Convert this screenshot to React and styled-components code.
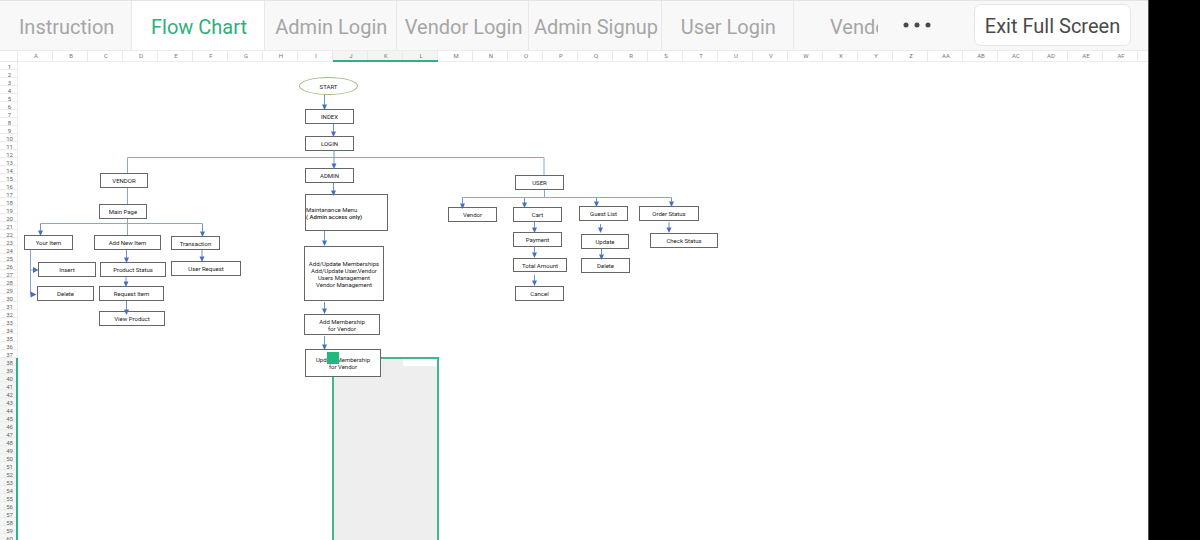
import React from 'react';
import styled, { createGlobalStyle } from 'styled-components';

const GlobalStyle = createGlobalStyle`
  * { box-sizing: border-box; }
  body {
    margin: 0;
    background: #fff;
    font-family: Roboto, "Liberation Sans", sans-serif;
  }
`;

const Shell = styled.div`
  display: flex;
  height: 100vh;
  overflow: hidden;
`;

const Main = styled.main`
  flex: 1;
  min-width: 0;
  display: flex;
  flex-direction: column;
`;

const Gutter = styled.aside`
  flex: 0 0 52px;
  background: #000;
  border-left: 1px solid #555;
`;

const TopBar = styled.header`
  display: flex;
  flex: 0 0 50px;
  background: #f8f8f8;
  border-top: 1px solid #e4e4e4;
`;

const TabStrip = styled.nav`
  flex: 1;
  min-width: 0;
  display: grid;
  grid-template-columns: repeat(6, minmax(0, 1fr)) 84px;
  overflow: hidden;
`;

const Tab = styled.button`
  border: 0;
  border-right: ${(p) => (p.$cut ? 0 : '1px solid #e8e8e8')};
  padding: ${(p) => (p.$cut ? '2px 0 0 36px' : '2px 0 0 2px')};
  background: ${(p) => (p.$active ? '#fff' : 'transparent')};
  color: ${(p) => (p.$active ? '#2bb07c' : '#a6a6a6')};
  font: 400 20px/24px Roboto, "Liberation Sans", sans-serif;
  text-align: ${(p) => (p.$cut ? 'left' : 'center')};
  white-space: nowrap;
  overflow: hidden;
`;

const Actions = styled.div`
  flex: 0 0 270px;
  display: flex;
  align-items: center;
  justify-content: space-between;
  padding: 0 17px 2px 18px;
`;

const MoreButton = styled.button`
  display: flex;
  align-items: center;
  justify-content: center;
  width: 42px;
  height: 40px;
  padding: 0;
  border: 0;
  background: transparent;
`;

const ExitButton = styled.button`
  width: 157px;
  height: 42px;
  padding: 2px 0 0;
  border: 1px solid #e6e6e6;
  border-radius: 7px;
  background: #fff;
  color: #4a4a4a;
  font: 400 20px/24px Roboto, "Liberation Sans", sans-serif;
  white-space: nowrap;
`;

const ColumnHeads = styled.div`
  display: flex;
  flex: 0 0 12px;
  overflow: hidden;
`;

const Corner = styled.div`
  flex: 0 0 18px;
  border: solid #e9e9e9;
  border-width: 1px 1px 1px 0;
`;

const ColumnHead = styled.div`
  flex: 0 0 35px;
  border-top: 1px solid #ececec;
  border-bottom: ${(p) => (p.$selected ? '2px solid #2fb281' : '1px solid #ececec')};
  box-shadow: inset -1px 0 #e9e9e9;
  padding-left: 1px;
  background: ${(p) => (p.$selected ? '#f2f5f4' : '#fff')};
  color: #777;
  font-size: 6px;
  line-height: 10px;
  text-align: center;
`;

const HeadFill = styled.div`
  flex: 1;
  border: solid #ececec;
  border-width: 1px 0;
`;

const SheetBody = styled.div`
  flex: 1;
  min-height: 0;
  display: flex;
  overflow: hidden;
`;

const RowHeads = styled.div`
  flex: 0 0 18px;
`;

const RowHead = styled.div`
  height: 8px;
  border-right: ${(p) => (p.$selected ? '2px solid #2fb281' : '1px solid #ececec')};
  box-shadow: inset 0 -1px #ececec;
  padding-left: ${(p) => (p.$selected ? '3px' : '2px')};
  background: ${(p) => (p.$selected ? '#f4f6f5' : '#fff')};
  color: #666;
  font-size: 6px;
  line-height: 9px;
  text-align: center;
`;

const Canvas = styled.section`
  position: relative;
  flex: 1;
  min-width: 0;
  overflow: hidden;
`;

const Wires = styled.svg`
  position: absolute;
  inset: 0;
  width: 100%;
  height: 100%;
`;

const Node = styled.div`
  position: absolute;
  left: ${(p) => p.$x}px;
  top: ${(p) => p.$y}px;
  width: ${(p) => p.$w}px;
  height: ${(p) => p.$h}px;
  display: flex;
  align-items: center;
  justify-content: ${(p) => (p.$left ? 'flex-start' : 'center')};
  border: 1px solid ${(p) => (p.$oval ? '#9dbb80' : '#666')};
  border-radius: ${(p) => (p.$oval ? '50%' : 0)};
  background: #fff;
  color: #222;
  font-size: 6px;
  line-height: 7px;
  text-align: ${(p) => (p.$left ? 'left' : 'center')};
  white-space: pre;
`;

const Strong = styled.span`
  font-weight: 500;
`;

const Selection = styled.div`
  position: absolute;
  left: 314px;
  top: 295px;
  bottom: -10px;
  width: 107px;
  border: 2px solid #3fb88b;
  background: #eee;
`;

const ActiveCell = styled.div`
  margin-left: auto;
  width: 34px;
  height: 7px;
  background: #fff;
`;

const Handle = styled.div`
  position: absolute;
  left: 309px;
  top: 290px;
  width: 12px;
  height: 12px;
  background: #22b97f;
`;

const TABS = [
  'Instruction', 'Flow Chart', 'Admin Login', 'Vendor Login',
  'Admin Signup', 'User Login', 'Vendor',
];

const COLUMNS = Array.from({ length: 32 }, (_, i) =>
  i < 26 ? String.fromCharCode(65 + i) : 'A' + String.fromCharCode(39 + i)
);
const SELECTED_COLUMNS = ['J', 'K', 'L'];
const ROWS = Array.from({ length: 60 }, (_, i) => i + 1);
const FIRST_SELECTED_ROW = 38;

// x, y, width, height, label
const NODES = [
  [287, 47, 49, 15, 'INDEX'],
  [287, 74, 49, 15, 'LOGIN'],
  [287, 106, 49, 15, 'ADMIN'],
  [286, 184, 80, 55, 'Add/Update Memberships\nAdd/Update User,Vendor\nUsers Management\nVendor Management'],
  [286, 252, 76, 21, 'Add Membership\nfor Vendor'],
  [287, 287, 76, 28, 'Update Membership\nfor Vendor'],
  [82, 111, 48, 15, 'VENDOR'],
  [81, 142, 48, 15, 'Main Page'],
  [6, 173, 49, 15, 'Your Item'],
  [76, 173, 67, 15, 'Add New Item'],
  [153, 174, 49, 14, 'Transaction'],
  [20, 200, 58, 15, 'Insert'],
  [19, 224, 57, 15, 'Delete'],
  [82, 200, 66, 15, 'Product Status'],
  [81, 224, 65, 15, 'Request Item'],
  [81, 249, 66, 15, 'View Product'],
  [153, 199, 70, 15, 'User Request'],
  [497, 113, 49, 15, 'USER'],
  [430, 145, 49, 15, 'Vendor'],
  [495, 145, 49, 15, 'Cart'],
  [561, 144, 49, 15, 'Guest List'],
  [621, 144, 60, 15, 'Order Status'],
  [495, 170, 49, 15, 'Payment'],
  [563, 172, 48, 15, 'Update'],
  [632, 171, 68, 15, 'Check Status'],
  [495, 196, 54, 14, 'Total Amount'],
  [563, 196, 49, 15, 'Delete'],
  [497, 224, 49, 15, 'Cancel'],
];

// Downward arrows: x, start y, tip y
const DOWN_ARROWS = [
  [306.5, 33, 48], [315.5, 62, 75], [316, 89, 107], [315.5, 121, 134],
  [306.5, 169, 184], [306.5, 240, 252], [306.5, 274, 288],
  [22.5, 162, 174], [184.5, 162, 175], [108.5, 188, 201], [108, 215, 225],
  [108.5, 239, 253], [184, 188, 200],
  [444.5, 136, 147], [506.5, 136, 146], [578.5, 136, 145], [653.5, 136, 145],
  [516.5, 160, 171], [516.5, 185, 196], [516.5, 213, 224],
  [582.5, 162, 171], [583.5, 187, 198], [651, 160, 171],
];

function Diagram() {
  return (
    <>
      {NODES.map(([x, y, w, h, label]) => (
        <Node key={`${x}-${y}`} $x={x} $y={y} $w={w} $h={h}>{label}</Node>
      ))}
      <Node $x={281} $y={15} $w={59} $h={18} $oval>START</Node>
      <Node $x={287} $y={132} $w={83} $h={37} $left>
        <div>
          Maintanance Menu{'\n'}
          <Strong>( Admin access only)</Strong>
        </div>
      </Node>
      <Wires aria-hidden="true">
        <g fill="none" stroke="#8aa6d6" strokeWidth="1">
          <path d="M109.5 111V95.5H526V113" />
          <path d="M109.5 126V142M109.5 157V173" />
          <path d="M22.5 162V161.5H184.5V162" />
          <path d="M12.5 188V232.5H14M12.5 208H15" />
          <path d="M526.5 128V136M444.5 136V135.5H653.5V136" />
        </g>
        <g fill="#4470bd" stroke="none">
          <path d="M15 205V211L20.5 208zM12.5 229.5V235.5L18.5 232.5z" />
          {DOWN_ARROWS.map(([x, , y]) => (
            <path key={`${x}-${y}`} d={`M${x - 2.5} ${y - 5.5}h5l-2.5 5.5z`} />
          ))}
        </g>
        <g stroke="#6e90cb" strokeWidth="1">
          {DOWN_ARROWS.map(([x, from, y]) => (
            <path key={`${x}-${y}`} d={`M${x} ${from}V${y - 5}`} />
          ))}
        </g>
      </Wires>
    </>
  );
}

export default function App() {
  return (
    <>
      <GlobalStyle />
      <Shell>
        <Main>
          <TopBar>
            <TabStrip aria-label="Sheets">
              {TABS.map((name, i) => (
                <Tab key={name} type="button" $active={i === 1} $cut={i === 6}
                  aria-current={i === 1 ? 'page' : undefined}>
                  {name}
                </Tab>
              ))}
            </TabStrip>
            <Actions>
              <MoreButton type="button" aria-label="More sheets">
                <svg width="30" height="6" viewBox="0 0 30 6" fill="#4a4a4a">
                  <circle cx="4" cy="3" r="2.5" />
                  <circle cx="15" cy="3" r="2.5" />
                  <circle cx="26" cy="3" r="2.5" />
                </svg>
              </MoreButton>
              <ExitButton type="button">Exit Full Screen</ExitButton>
            </Actions>
          </TopBar>
          <ColumnHeads>
            <Corner />
            {COLUMNS.map((c) => (
              <ColumnHead key={c} $selected={SELECTED_COLUMNS.includes(c)}>{c}</ColumnHead>
            ))}
            <HeadFill />
          </ColumnHeads>
          <SheetBody>
            <RowHeads>
              {ROWS.map((r) => (
                <RowHead key={r} $selected={r >= FIRST_SELECTED_ROW}>{r}</RowHead>
              ))}
            </RowHeads>
            <Canvas aria-label="Flow chart">
              <Selection><ActiveCell /></Selection>
              <Diagram />
              <Handle />
            </Canvas>
          </SheetBody>
        </Main>
        <Gutter />
      </Shell>
    </>
  );
}
